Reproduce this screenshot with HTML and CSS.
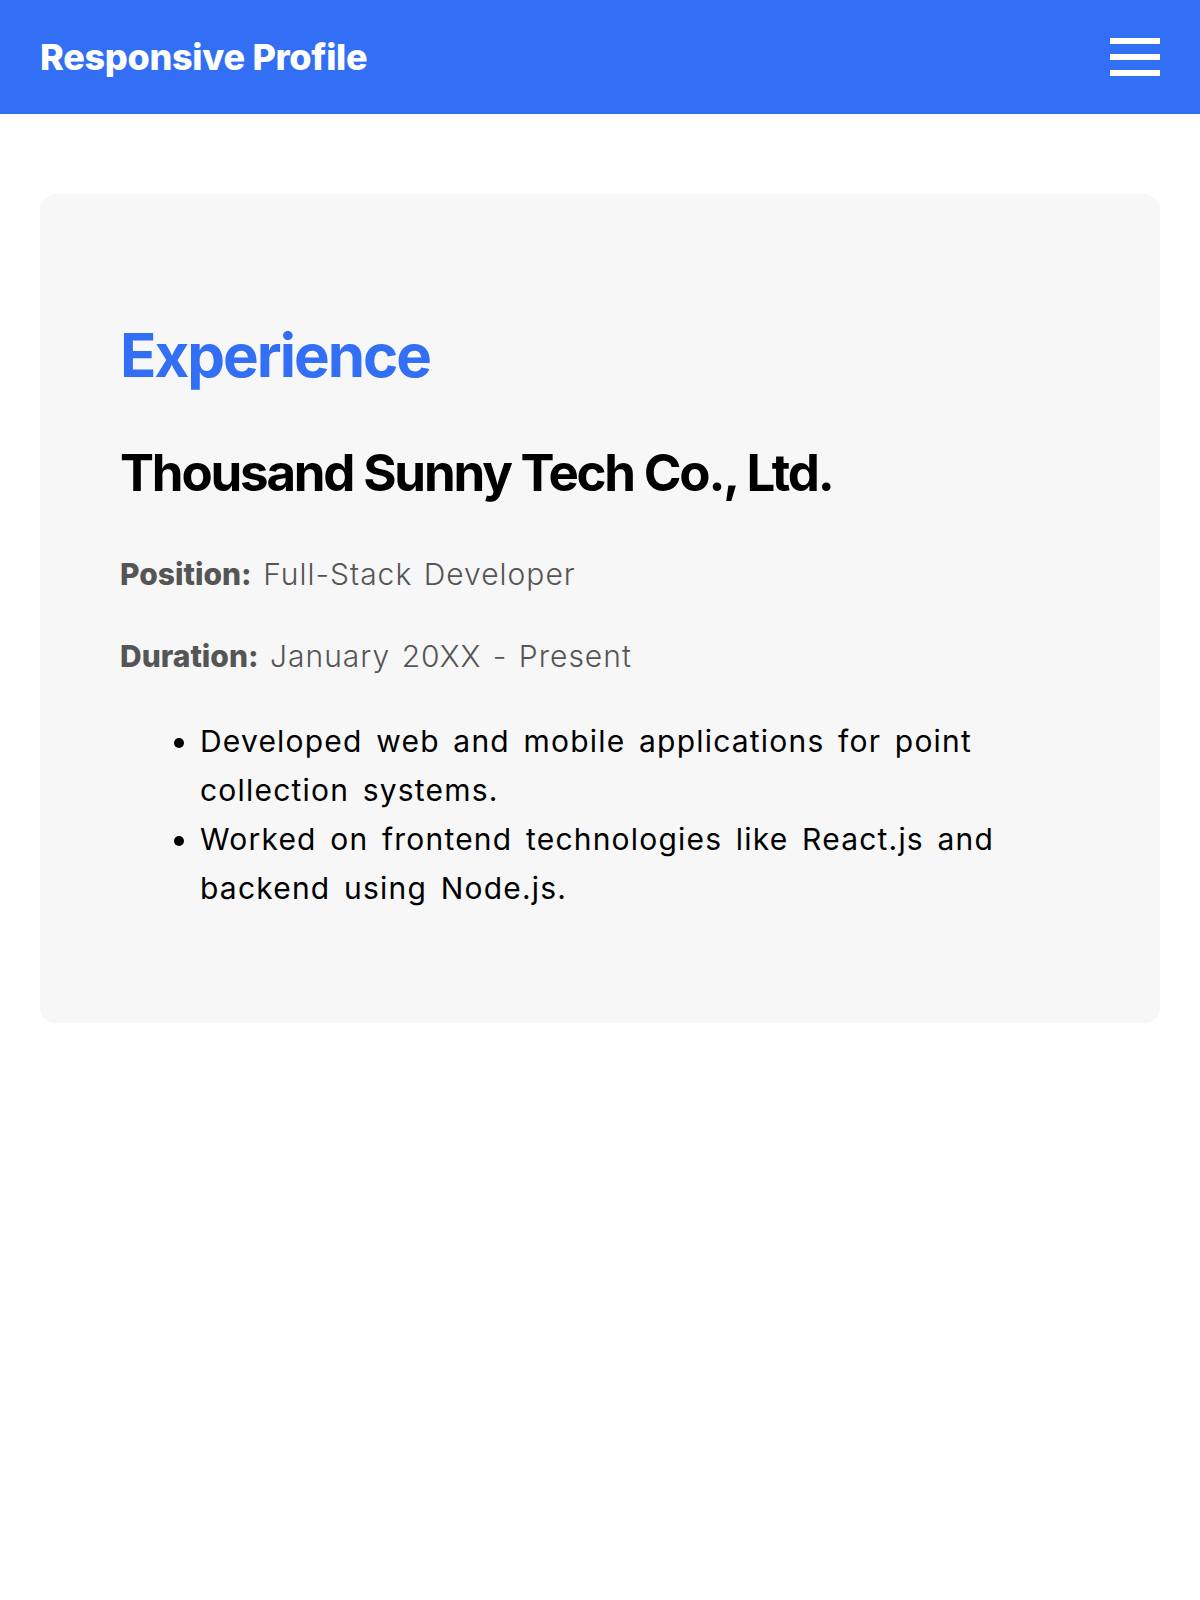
FILE: index.html
```html
<!DOCTYPE html>
<html lang="en">
<head>
<meta charset="utf-8">
<title>Responsive Profile</title>
<link rel="stylesheet" href="styles.css">
</head>
<body>
<header class="topbar">
  <div class="brand">Responsive Profile</div>
  <button class="menu" aria-label="Menu">
    <span class="bar"></span>
    <span class="bar"></span>
    <span class="bar"></span>
  </button>
</header>
<main class="page">
  <section class="card">
    <h2 class="section-title">Experience</h2>
    <h3 class="company">Thousand Sunny Tech Co., Ltd.</h3>
    <p class="meta"><strong>Position:</strong> Full-Stack Developer</p>
    <p class="meta"><strong>Duration:</strong> January 20XX - Present</p>
    <ul class="duties">
      <li>Developed web and mobile applications for point collection systems.</li>
      <li>Worked on frontend technologies like React.js and backend using Node.js.</li>
    </ul>
  </section>
</main>
</body>
</html>
```
FILE: styles.css
```css
* { box-sizing: border-box; }
html, body { margin: 0; padding: 0; background: #ffffff; }
body { font-family: "Inter", "Noto Sans", sans-serif; color: #000; }

.topbar {
  height: 114px;
  background: #336ff5;
  display: flex;
  align-items: center;
  justify-content: space-between;
  padding: 0 40px;
}
.brand {
  color: #fff;
  font-size: 36px;
  font-weight: 800;
  letter-spacing: -0.3px;
}
.menu {
  background: none;
  border: 0;
  padding: 0;
  width: 50px;
  display: flex;
  flex-direction: column;
  gap: 10px;
  cursor: pointer;
}
.bar { display: block; height: 6px; width: 50px; background: #fff; }

.page { padding: 80px 40px; }
.card {
  background: #f7f7f7;
  border-radius: 16px;
  padding: 125px 80px 110px;
}
.section-title {
  margin: 0;
  color: #336ff5;
  font-size: 60px;
  line-height: 72px;
  font-weight: 700;
  letter-spacing: -2px;
}
.company {
  margin: 51px 0 0;
  font-size: 51px;
  line-height: 62px;
  font-weight: 700;
  letter-spacing: -2.2px;
  word-spacing: 0;
}
.meta {
  margin: 49px 0 0;
  font-size: 30px;
  line-height: 42px;
  color: #555;
  font-weight: 300;
  letter-spacing: 1px;
  word-spacing: 2px;
}
.meta + .meta { margin-top: 40px; }
.meta strong { font-weight: 800; letter-spacing: 0; }
.duties {
  margin: 40px 0 0;
  padding-left: 80px;
  font-size: 30px;
  line-height: 49px;
  letter-spacing: 1.2px;
  word-spacing: 4px;
}
```
